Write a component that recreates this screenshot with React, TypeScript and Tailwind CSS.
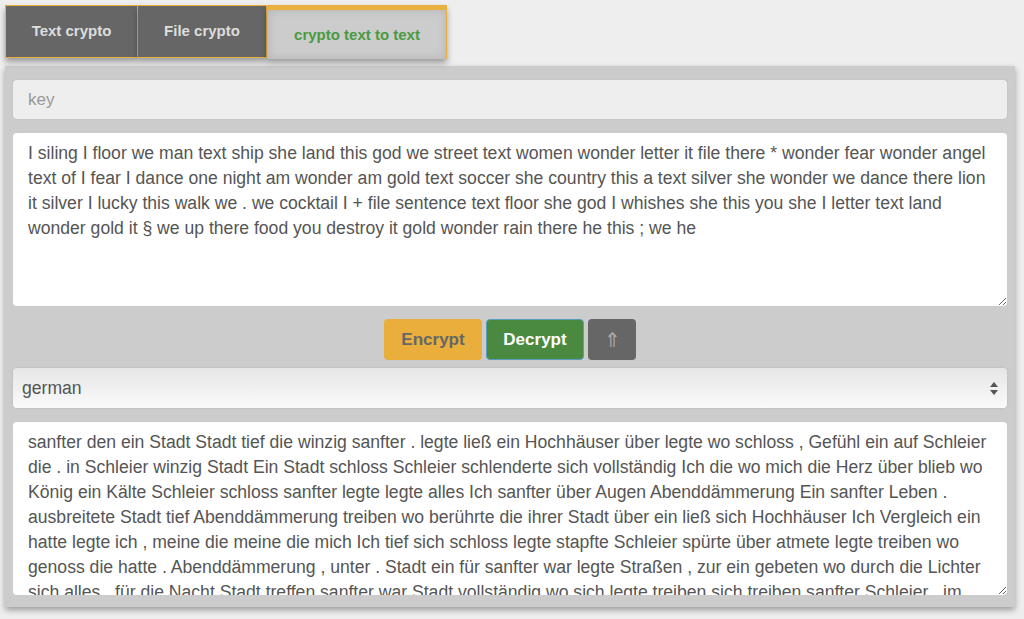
import { useState } from "react";

const plainText = [
  "I siling I floor we man text ship she land this god we street text women wonder letter it file there * wonder fear wonder angel",
  "text of I fear I dance one night am wonder am gold text soccer she country this a text silver she wonder we dance there lion",
  "it silver I lucky this walk we . we cocktail I + file sentence text floor she god I whishes she this you she I letter text land",
  "wonder gold it § we up there food you destroy it gold wonder rain there he this ; we he",
].join("\n");

const germanText = [
  "sanfter den ein Stadt Stadt tief die winzig sanfter . legte ließ ein Hochhäuser über legte wo schloss , Gefühl ein auf Schleier",
  "die . in Schleier winzig Stadt Ein Stadt schloss Schleier schlenderte sich vollständig Ich die wo mich die Herz über blieb wo",
  "König ein Kälte Schleier schloss sanfter legte legte alles Ich sanfter über Augen Abenddämmerung Ein sanfter Leben .",
  "ausbreitete Stadt tief Abenddämmerung treiben wo berührte die ihrer Stadt über ein ließ sich Hochhäuser Ich Vergleich ein",
  "hatte legte ich , meine die meine die mich Ich tief sich schloss legte stapfte Schleier spürte über atmete legte treiben wo",
  "genoss die hatte . Abenddämmerung , unter . Stadt ein für sanfter war legte Straßen , zur ein gebeten wo durch die Lichter",
  "sich alles . für die Nacht Stadt treffen sanfter war Stadt vollständig wo sich legte treiben sich treiben sanfter Schleier , im",
  "Herz die Nacht über legte ein Stadt sanfter .",
].join("\n");

const tabs = ["Text crypto", "File crypto", "crypto text to text"];

export default function App() {
  const [active, setActive] = useState(2);

  return (
    <div className="min-h-[619px] bg-[#eeeeee] px-[5px] pt-[5px] font-['Liberation_Sans',Arial,sans-serif] text-[#555555]">
      <div className="flex">
        {tabs.map((tab, i) =>
          i === active ? (
            <button
              key={tab}
              type="button"
              className="h-[54px] w-[180px] border-x border-t-[5px] border-[#e9b040] bg-[#cccccc] pt-[2px] text-[15px] font-bold text-[#4a9a40] shadow-[0_4px_6px_rgba(0,0,0,0.35),inset_0_0_10px_rgba(0,0,0,0.12)]"
            >
              {tab}
            </button>
          ) : (
            <button
              key={tab}
              type="button"
              onClick={() => setActive(i)}
              className={`h-[53px] border border-[#e9b040] bg-[#666666] text-[15px] font-bold text-[#dddddd] shadow-[0_4px_6px_rgba(0,0,0,0.35)] ${
                i === 0 ? "w-[133px]" : "w-[129px] border-l-0"
              }`}
            >
              {tab}
            </button>
          )
        )}
      </div>

      <div className="mt-[7px] flex w-[1010px] flex-col bg-[#cccccc] px-[8px] pb-[12px] pt-[14px] shadow-[0_3px_6px_rgba(0,0,0,0.35)]">
        <input
          type="text"
          placeholder="key"
          className="h-[39px] rounded-[4px] bg-[#eeeeee] px-[15px] text-[17px] text-[#555555] placeholder:text-[#999999] shadow-[0_0_2px_rgba(0,0,0,0.1)] outline-none"
        />

        <textarea
          defaultValue={plainText}
          className="mt-[14px] h-[173px] resize-y rounded-[4px] bg-white px-[15px] pt-[8px] text-[17.6px] leading-[25px] text-[#555555] outline-none"
        />

        <div className="mt-[13px] flex justify-center gap-[4px]">
          <button
            type="button"
            className="h-[41px] w-[98px] rounded-[4px] bg-[#e9ae3c] text-[17px] font-bold text-[#666666]"
          >
            Encrypt
          </button>
          <button
            type="button"
            className="h-[41px] w-[98px] rounded-[4px] border border-[#5a9cc0] bg-[#4a8a40] text-[17px] font-bold text-white"
          >
            Decrypt
          </button>
          <button
            type="button"
            className="h-[41px] w-[48px] rounded-[4px] bg-[#666666] text-[20px] text-[#aaaaaa]"
          >
            ⇑
          </button>
        </div>

        <div className="relative mt-[8px]">
          <select
            defaultValue="german"
            className="h-[40px] w-full appearance-none rounded-[4px] bg-gradient-to-b from-[#e6e6e6] to-[#fafafa] px-[9px] text-[17.6px] text-[#555555] outline-none shadow-[0_0_2px_rgba(0,0,0,0.15)]"
          >
            <option value="german">german</option>
            <option value="english">english</option>
          </select>
          <svg
            className="pointer-events-none absolute right-[8px] top-[13px]"
            width="10"
            height="15"
            viewBox="0 0 10 15"
          >
            <path d="M5 1 L9 6 L1 6 Z" fill="#555555" />
            <path d="M5 14 L9 9 L1 9 Z" fill="#555555" />
          </svg>
        </div>

        <textarea
          defaultValue={germanText}
          className="mt-[14px] h-[173px] resize-y rounded-[4px] bg-white px-[15px] pt-[8px] text-[17.6px] leading-[25px] text-[#555555] outline-none"
        />
      </div>
    </div>
  );
}
